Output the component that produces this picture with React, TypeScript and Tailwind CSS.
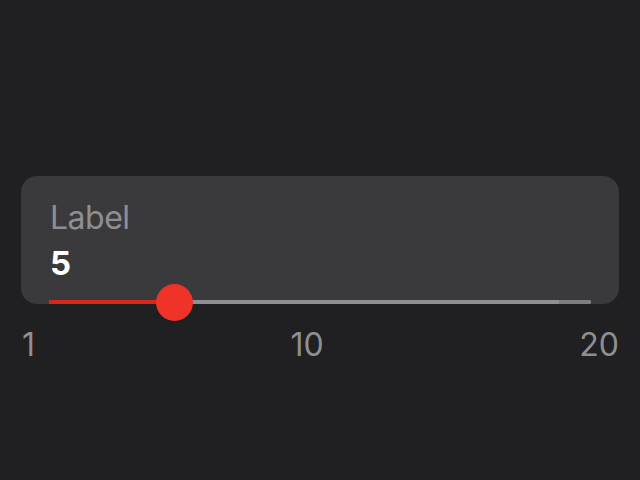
export default function App() {
  return (
    <div
      className="w-[640px] h-[480px] bg-[#202022] pt-[176px] px-[21px]"
      style={{ fontFamily: "Inter, 'Noto Sans', sans-serif" }}
    >
      <div className="relative h-[128px] rounded-[16px] bg-[#3a3a3c] px-[28px] flex flex-col">
        <div className="pt-[23px] pl-[1px] text-[32px] leading-[38px] tracking-[-0.5px] text-[#8e8e93]">Label</div>
        <div className="pl-[1px] mt-[7px] text-[33px] leading-[38px] font-bold text-white">5</div>
        <div className="mt-auto relative h-[4px] rounded-full bg-[#8e8e93]">
          <div className="absolute left-0 top-0 h-[4px] w-[126px] bg-[#d8261b]" />
          <div className="absolute right-0 top-0 h-[4px] w-[32px] rounded-r-full bg-[#7d7d82]" />
          <div className="absolute left-[107px] top-[-16px] w-[37px] h-[37px] rounded-full bg-[#ef3328]" />
        </div>
      </div>
      <div className="flex justify-between items-start mt-[22px] text-[32px] leading-[38px] text-[#8e8e93] pl-[1px] pr-0">
        <span>1</span>
        <span>10</span>
        <span>20</span>
      </div>
    </div>
  );
}
